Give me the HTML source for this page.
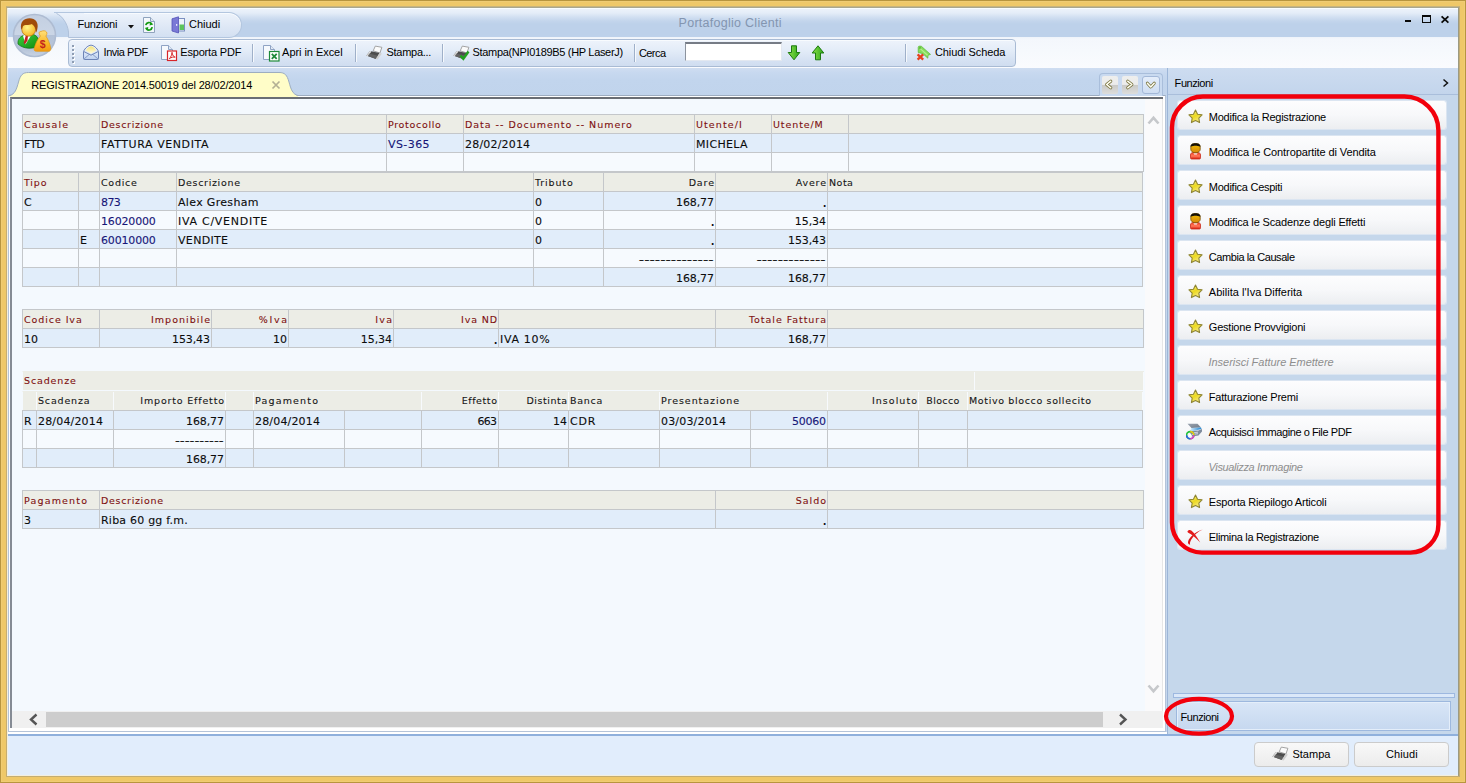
<!DOCTYPE html>
<html lang="it">
<head>
<meta charset="utf-8">
<title>Portafoglio Clienti</title>
<style>
*{box-sizing:border-box;margin:0;padding:0}
html,body{width:1466px;height:783px;overflow:hidden;background:#ebc566}
body{position:relative;font-family:"Liberation Sans","DejaVu Sans",sans-serif;font-size:11px;color:#000}
.abs{position:absolute}
#frame{position:absolute;left:0;top:0;width:1466px;height:783px;background:#efc868;box-shadow:inset 0 0 0 1px #b8953e,inset 0 0 0 2px #f0cc73}
#frame2{position:absolute;left:6px;top:6px;width:1454px;height:771px;background:#f5efdc;border:1px solid #c4ad72;border-top-color:#c8b47c}
#frame3{position:absolute;left:7px;top:7px;width:1452px;height:769px;border-top:1px solid #a9a78f;border-right:1px solid #9c9a82}
#win{position:absolute;left:8px;top:8px;width:1450px;height:767px;background:#c6d8ee;overflow:hidden}
/* title area */
#title{border-top:1px solid #fafdfd;position:absolute;left:0;top:0;width:1450px;height:30px;background:linear-gradient(#ecf2fa 0,#e4edf8 4px,#d2e0f2 8px,#c3d5ec 12px,#bdd1ea 15px,#bdd1ea 30px)}
#band{position:absolute;left:0;top:29px;width:1450px;height:31px;background:linear-gradient(#eef3fa 0,#f4f7fc 2px,#f6f9fd 14px,#fafbfe 31px)}
#qat{position:absolute;left:76px;top:4px;width:158px;height:26px;border:1px solid #b3c6df;border-left:none;border-radius:0 13px 13px 0;background:linear-gradient(#edf3fb 0,#e0e9f6 50%,#d3e0f2 100%);box-shadow:inset 0 1px 0 #f8fbfe}
#qatl{position:absolute;left:30px;top:4px;width:34px;height:26px}
#toolbar{position:absolute;left:60px;top:31px;width:948px;height:28px;border:1px solid #a9bbd4;border-radius:4px;background:linear-gradient(#eef3fb 0,#e3ecf8 40%,#d6e2f3 75%,#d0ddf0 100%);box-shadow:inset 0 1px 0 #f8fbfe}
/* tab strip */
#tabstrip{position:absolute;left:0;top:60px;width:1160px;height:30px;background:linear-gradient(#cfddf1 0,#c7d8ef 5px,#c2d5ed 12px,#c1d4ec 30px)}
#contentw{position:absolute;left:0;top:87px;width:1158px;height:637px;background:#fff;border:1px solid #b4c3d8;border-top-color:#9eadc0}
#content{position:absolute;left:2px;top:89px;width:1153px;height:631px;border-top:2px solid #6a6e74;border-left:2px solid #858b94;background:#f4f9fe}
#vsb{position:absolute;left:1137px;top:91px;width:18px;height:612px;background:#fafafb;border-right:1px solid #e6e6e6}
#hsb{position:absolute;left:4px;top:703px;width:1151px;height:17px;background:#f0f0f0}
#hthumb{position:absolute;left:38px;top:704px;width:1057px;height:15px;background:#cdcdcd}
#l2{position:absolute;left:0;top:724px;width:1159px;height:2px;background:#fff}
/* tables */
table.g{position:absolute;border-collapse:separate;border-spacing:0;border-top:1px solid #c4c7ca;border-left:1px solid #c4c7ca;table-layout:fixed;font-family:"DejaVu Sans","Liberation Sans",sans-serif;font-size:11px;color:#0c0c0c;-webkit-text-stroke:0.1px currentColor}
table.g td{border-right:1px solid #c4c7ca;border-bottom:1px solid #c4c7ca;padding:3px 1px 0 1px;white-space:nowrap;overflow:hidden;line-height:15px;vertical-align:top}
table.g tr.h td{background:#ecede6;color:#7e1010;font-size:9.5px;padding-top:2px}
table.g tr.hb td{background:#ecede6;color:#161616;font-size:9.5px;padding-top:2px}
table.g tr.hb td.red{color:#7e1010}
table.g tr.nb td{border-right-color:#f7fafd;border-bottom-color:#f4f9fe}
table.g.nbt{border-top-color:#ecede6;border-left-color:#f4f9fe}
table.g.nbt tr td{padding-top:1px}
table.g tr.a td{background:#e1edfa}
table.g tr.w td{background:#f6fafe}
table.g td.r{text-align:right}
table.g td.c{text-align:center}
table.g td.b{color:#161678}
.t{position:absolute;white-space:nowrap;color:#000}
/* right panel */
#rp{position:absolute;left:1159px;top:60px;width:291px;height:666px;background:#c5d7eb;border-left:1px solid #9db6d8}
#rph{position:absolute;left:0;top:0;width:290px;height:27px;border-bottom:1px solid #a9bedb;background:linear-gradient(#cddcf0,#c3d5ec)}
.fb{position:absolute;left:1169px;width:270px;height:30px;border-radius:3px;background:linear-gradient(#fdfdfe 0,#f7f8fa 50%,#eceef1 100%);border:1px solid rgba(226,233,243,.75);background-clip:padding-box;box-shadow:none}
#split{position:absolute;left:1165px;top:685px;width:282px;height:5px;border:1px solid #9db8e0;background:#dbe8f9}
#grp{position:absolute;left:1168px;top:693px;width:275px;height:30px;border:1px solid #9db8de;background:linear-gradient(#d9e6f7 0,#cfdff3 50%,#c6d8ef 100%);box-shadow:inset 0 0 0 1px #e4eefa}
/* bottom */
#bline{position:absolute;left:0;top:726px;width:1450px;height:2px;background:#8fb0dc}
#bottom{position:absolute;left:0;top:728px;width:1450px;height:39px;background:#e1edfc}
.btn{position:absolute;top:734px;width:95px;height:25px;border:1px solid #cbcbcb;border-radius:4px;background:linear-gradient(#f8f8f8,#ececec)}
</style>
</head>
<body>
<div id="frame"></div><div id="frame2"></div><div id="frame3"></div>
<div id="win">
  <div id="title"></div>
  <div id="band"></div>
  <div id="qat"></div>
  <div id="toolbar"></div>
  <div id="tabstrip"></div>
  <div id="rp"><div id="rph"></div></div>
  <div id="contentw"></div>
  <div id="content"></div>
  <div id="vsb"></div><div id="hsb"></div><div id="hthumb"></div>
  <div id="l2"></div>
<table class="g " id="t1" style="left:14px;top:106px;width:1122px">
<colgroup><col style="width:77px"><col style="width:287px"><col style="width:77px"><col style="width:231px"><col style="width:77px"><col style="width:77px"><col style="width:295px"></colgroup>
<tr class="h" style="height:19px">
<td style="letter-spacing:1.04px">Causale</td>
<td style="letter-spacing:0.68px">Descrizione</td>
<td style="letter-spacing:0.68px">Protocollo</td>
<td style="letter-spacing:0.98px">Data -- Documento -- Numero</td>
<td style="letter-spacing:1.09px">Utente/I</td>
<td style="letter-spacing:0.9px">Utente/M</td>
<td></td>
</tr>
<tr class="a" style="height:19px">
<td style="letter-spacing:-0.25px">FTD</td>
<td style="letter-spacing:0.58px">FATTURA VENDITA</td>
<td class="b" style="letter-spacing:0.43px">VS-365</td>
<td style="letter-spacing:0.19px">28/02/2014</td>
<td style="letter-spacing:0.33px">MICHELA</td>
<td></td>
<td></td>
</tr>
<tr class="w" style="height:19px">
<td></td>
<td></td>
<td></td>
<td></td>
<td></td>
<td></td>
<td></td>
</tr>
</table>
<table class="g " id="t2" style="left:14px;top:164px;width:1121px">
<colgroup><col style="width:56px"><col style="width:21px"><col style="width:77px"><col style="width:357px"><col style="width:70px"><col style="width:112px"><col style="width:112px"><col style="width:315px"></colgroup>
<tr class="hb" style="height:19px">
<td class="red" style="letter-spacing:0.82px">Tipo</td>
<td></td>
<td style="letter-spacing:0.72px">Codice</td>
<td style="letter-spacing:0.68px">Descrizione</td>
<td style="letter-spacing:0.87px">Tributo</td>
<td class="r" style="letter-spacing:0.87px"><span style="margin-right:-0.87px">Dare</span></td>
<td class="r" style="letter-spacing:0.84px"><span style="margin-right:-0.84px">Avere</span></td>
<td style="letter-spacing:0.48px">Nota</td>
</tr>
<tr class="a" style="height:19px">
<td>C</td>
<td></td>
<td class="b" style="letter-spacing:-0.6px">873</td>
<td style="letter-spacing:0.33px">Alex Gresham</td>
<td>0</td>
<td class="r" style="letter-spacing:-0.1px"><span style="margin-right:0.1px">168,77</span></td>
<td class="r"><span style="font-size:15px;line-height:0;position:relative;top:1px;margin-right:-1px">.</span></td>
<td></td>
</tr>
<tr class="w" style="height:19px">
<td></td>
<td></td>
<td class="b" style="letter-spacing:-0.16px">16020000</td>
<td style="letter-spacing:0.73px">IVA C/VENDITE</td>
<td>0</td>
<td class="r"><span style="font-size:15px;line-height:0;position:relative;top:1px;margin-right:-1px">.</span></td>
<td class="r" style="letter-spacing:-0.08px"><span style="margin-right:0.08px">15,34</span></td>
<td></td>
</tr>
<tr class="a" style="height:19px">
<td></td>
<td>E</td>
<td class="b" style="letter-spacing:-0.16px">60010000</td>
<td style="letter-spacing:0.33px">VENDITE</td>
<td>0</td>
<td class="r"><span style="font-size:15px;line-height:0;position:relative;top:1px;margin-right:-1px">.</span></td>
<td class="r" style="letter-spacing:-0.12px"><span style="margin-right:0.12px">153,43</span></td>
<td></td>
</tr>
<tr class="w" style="height:19px">
<td></td>
<td></td>
<td></td>
<td></td>
<td></td>
<td class="r"><span style="display:inline-block;transform-origin:100% 50%;transform:scaleX(1.345)">--------------</span></td>
<td class="r"><span style="display:inline-block;transform-origin:100% 50%;transform:scaleX(1.341)">-------------</span></td>
<td></td>
</tr>
<tr class="a" style="height:19px">
<td></td>
<td></td>
<td></td>
<td></td>
<td></td>
<td class="r" style="letter-spacing:-0.1px"><span style="margin-right:0.1px">168,77</span></td>
<td class="r" style="letter-spacing:-0.1px"><span style="margin-right:0.1px">168,77</span></td>
<td></td>
</tr>
</table>
<table class="g " id="t3" style="left:14px;top:301px;width:1122px">
<colgroup><col style="width:77px"><col style="width:112px"><col style="width:77px"><col style="width:105px"><col style="width:105px"><col style="width:217px"><col style="width:112px"><col style="width:316px"></colgroup>
<tr class="h" style="height:19px">
<td style="letter-spacing:0.92px">Codice Iva</td>
<td class="r" style="letter-spacing:1.03px"><span style="margin-right:-1.03px">Imponibile</span></td>
<td class="r" style="letter-spacing:1.65px"><span style="margin-right:-1.65px">%Iva</span></td>
<td class="r" style="letter-spacing:1.28px"><span style="margin-right:-1.28px">Iva</span></td>
<td class="r" style="letter-spacing:0.86px"><span style="margin-right:-0.86px">Iva ND</span></td>
<td></td>
<td class="r" style="letter-spacing:0.95px"><span style="margin-right:-0.95px">Totale Fattura</span></td>
<td></td>
</tr>
<tr class="a" style="height:19px">
<td>10</td>
<td class="r" style="letter-spacing:-0.12px"><span style="margin-right:0.12px">153,43</span></td>
<td class="r">10</td>
<td class="r" style="letter-spacing:-0.08px"><span style="margin-right:0.08px">15,34</span></td>
<td class="r"><span style="font-size:15px;line-height:0;position:relative;top:1px;margin-right:-1px">.</span></td>
<td style="letter-spacing:0.68px">IVA 10%</td>
<td class="r" style="letter-spacing:-0.1px"><span style="margin-right:0.1px">168,77</span></td>
<td></td>
</tr>
</table>
<table class="g nbt" id="t4a" style="left:14px;top:363px;width:1122px">
<colgroup><col style="width:952px"><col style="width:169px"></colgroup>
<tr class="h nb" style="height:19px">
<td style="letter-spacing:0.87px">Scadenze</td>
<td></td>
</tr>
</table>
<table class="g nbt" id="t4h" style="left:14px;top:383px;width:1121px">
<colgroup><col style="width:14px"><col style="width:77px"><col style="width:112px"><col style="width:28px"><col style="width:168px"><col style="width:77px"><col style="width:70px"><col style="width:91px"><col style="width:168px"><col style="width:91px"><col style="width:49px"><col style="width:175px"></colgroup>
<tr class="hb nb" style="height:19px">
<td></td>
<td style="letter-spacing:0.83px">Scadenza</td>
<td class="r" style="letter-spacing:0.82px"><span style="margin-right:-0.82px">Importo Effetto</span></td>
<td></td>
<td style="letter-spacing:1.17px">Pagamento</td>
<td class="r" style="letter-spacing:0.59px"><span style="margin-right:-0.59px">Effetto</span></td>
<td class="r" style="letter-spacing:0.52px"><span style="margin-right:-0.52px">Distinta</span></td>
<td style="letter-spacing:0.72px">Banca</td>
<td style="letter-spacing:0.95px">Presentazione</td>
<td class="r" style="letter-spacing:1.04px"><span style="margin-right:-1.04px">Insoluto</span></td>
<td class="c" style="letter-spacing:0.37px">Blocco</td>
<td style="letter-spacing:0.64px">Motivo blocco sollecito</td>
</tr>
</table>
<table class="g " id="t4" style="left:14px;top:402px;width:1121px">
<colgroup><col style="width:14px"><col style="width:77px"><col style="width:112px"><col style="width:28px"><col style="width:91px"><col style="width:77px"><col style="width:77px"><col style="width:70px"><col style="width:91px"><col style="width:91px"><col style="width:77px"><col style="width:91px"><col style="width:49px"><col style="width:175px"></colgroup>
<tr class="a" style="height:19px">
<td>R</td>
<td style="letter-spacing:0.17px">28/04/2014</td>
<td class="r" style="letter-spacing:-0.1px"><span style="margin-right:0.1px">168,77</span></td>
<td></td>
<td style="letter-spacing:0.17px">28/04/2014</td>
<td></td>
<td class="r" style="letter-spacing:-0.7px"><span style="margin-right:0.7px">663</span></td>
<td class="r">14</td>
<td style="letter-spacing:0.8px">CDR</td>
<td style="letter-spacing:0.18px">03/03/2014</td>
<td class="r b" style="letter-spacing:-0.25px"><span style="margin-right:0.25px">50060</span></td>
<td></td>
<td></td>
<td></td>
</tr>
<tr class="w" style="height:19px">
<td></td>
<td></td>
<td class="r"><span style="display:inline-block;transform-origin:100% 50%;transform:scaleX(1.227)">----------</span></td>
<td></td>
<td></td>
<td></td>
<td></td>
<td></td>
<td></td>
<td></td>
<td></td>
<td></td>
<td></td>
<td></td>
</tr>
<tr class="a" style="height:19px">
<td></td>
<td></td>
<td class="r" style="letter-spacing:-0.1px"><span style="margin-right:0.1px">168,77</span></td>
<td></td>
<td></td>
<td></td>
<td></td>
<td></td>
<td></td>
<td></td>
<td></td>
<td></td>
<td></td>
<td></td>
</tr>
</table>
<table class="g " id="t5" style="left:14px;top:482px;width:1122px">
<colgroup><col style="width:77px"><col style="width:616px"><col style="width:112px"><col style="width:316px"></colgroup>
<tr class="h" style="height:19px">
<td style="letter-spacing:1.17px">Pagamento</td>
<td style="letter-spacing:0.68px">Descrizione</td>
<td class="r" style="letter-spacing:0.99px"><span style="margin-right:-0.99px">Saldo</span></td>
<td></td>
</tr>
<tr class="a" style="height:19px">
<td>3</td>
<td style="letter-spacing:0.22px">Riba 60 gg f.m.</td>
<td class="r"><span style="font-size:15px;line-height:0;position:relative;top:1px;margin-right:-1px">.</span></td>
<td></td>
</tr>
</table>
<svg class="abs" style="left:42px;top:4px" width="34" height="27" viewBox="0 0 34 27">
<defs><linearGradient id="qg" x1="0" y1="0" x2="0" y2="1"><stop offset="0" stop-color="#edf3fb"/><stop offset="0.5" stop-color="#e0e9f6"/><stop offset="1" stop-color="#d3e0f2"/></linearGradient></defs>
<path d="M6.500 0.500 C12 3.500 17.500 11 18.500 20 V25.500 H34 V0.500Z" fill="url(#qg)"/>
<path d="M6.500 1.500 C12 4 17.500 11 18.500 20 V25.500 H34" fill="none" stroke="#b0c2db" stroke-width="1"/>
<path d="M4 0.500 H34" fill="none" stroke="#b3c6df" stroke-width="1"/>
</svg>
<svg class="abs" style="left:4px;top:5px" width="46" height="46" viewBox="0 0 46 46">
<defs>
<linearGradient id="og" x1="0" y1="0" x2="0" y2="1"><stop offset="0" stop-color="#c3cfe1"/><stop offset="0.5" stop-color="#cbd6e6"/><stop offset="0.5" stop-color="#b4c2d7"/><stop offset="0.85" stop-color="#b9c6da"/><stop offset="1" stop-color="#c9d4e4"/></linearGradient>
<linearGradient id="bag" x1="0" y1="0" x2="0" y2="1"><stop offset="0" stop-color="#ffe07a"/><stop offset="0.6" stop-color="#fbb826"/><stop offset="1" stop-color="#f29a12"/></linearGradient>
<linearGradient id="suit" x1="0" y1="0" x2="1" y2="1"><stop offset="0" stop-color="#3fd23f"/><stop offset="1" stop-color="#0f8a0f"/></linearGradient>
<radialGradient id="face" cx="40%" cy="35%" r="75%"><stop offset="0" stop-color="#fff48a"/><stop offset="1" stop-color="#f6ae16"/></radialGradient>
</defs>
<circle cx="22.500" cy="22.500" r="21" fill="url(#og)" stroke="#aebcd2" stroke-width="1.600"/>
<!-- man -->
<path d="M6 31 C5.500 26 8.500 23 13 22 L20 21 C24 22 26.500 24.500 26.500 28 L26 33 C21 36.500 11 36 6 31Z" fill="url(#suit)" stroke="#0b6b0b" stroke-width="0.700"/>
<path d="M11 22.800 L15 20.500 L19 22.500 L13.500 31.500Z" fill="#fff"/>
<path d="M13.800 22.500 L16 22.500 L15.500 27.500 L12.800 31.500 L11.800 29.500Z" fill="#c62020"/>
<ellipse cx="16.700" cy="16.500" rx="6.900" ry="6.700" fill="url(#face)" stroke="#b5680e" stroke-width="0.700"/>
<path d="M9.200 16.500 C7.800 9 12 5.300 17.500 5.300 C23.500 5.300 27 10 25.300 16 C25 18 24.500 19 24 19.500 C23.800 15.500 22.500 12.500 20 11 C16.500 12.500 12.500 11.500 11 13 C10.300 14 10 16 9.200 16.500Z" fill="#a04c0a"/>
<!-- bag -->
<path d="M28.500 23 C26.500 21 26.500 18.200 29 18.500 C31 17.300 33.500 17.600 34.500 19 C35.500 20.500 34.500 22.300 33.800 23 C36 26 38 31 38.700 35 C39 37.500 38 38.300 36 38.300 H24.500 C22.500 38.300 21.800 37.300 22.300 35.300 C23.300 31 25.500 26 28.500 23Z" fill="url(#bag)" stroke="#e29a14" stroke-width="0.700"/>
<text x="30.600" y="35" font-family="Liberation Sans,sans-serif" font-weight="bold" font-size="10.500" fill="#c4241c" text-anchor="middle">$</text>
</svg>
<div class="t" style="left:69.4px;top:7.5px;height:16px;line-height:16px;font-size:11px;letter-spacing:-0.23px;">Funzioni</div>
<svg class="abs" style="left:120px;top:17px" width="6" height="4" viewBox="0 0 6 4"><path d="M0 0H6L3 3.500Z" fill="#111"/></svg>
<svg class="abs" style="left:134px;top:8px" width="14" height="18" viewBox="0 0 14 18">
<path d="M1.500 1.500H8.500L12.500 5.500V16.500H1.500Z" fill="#f4f8fc" stroke="#8fa3bd" stroke-width="1"/>
<path d="M8.500 1.500V5.500H12.500" fill="#dfe7f1" stroke="#8fa3bd" stroke-width="1"/>
<path d="M3.800 9.200 A3.300 3.300 0 0 1 9.800 8" fill="none" stroke="#149a14" stroke-width="1.700"/>
<path d="M8.200 6 L11.300 8.600 L7.600 9.600Z" fill="#149a14"/>
<path d="M10.200 11.200 A3.300 3.300 0 0 1 4.200 12.600" fill="none" stroke="#149a14" stroke-width="1.700"/>
<path d="M5.800 14.500 L2.700 12 L6.300 10.900Z" fill="#149a14"/>
</svg>
<svg class="abs" style="left:163px;top:8px" width="15" height="18" viewBox="0 0 15 18">
<rect x="6.500" y="2.500" width="7" height="12.500" fill="#eef3fb" stroke="#7b8fc0" stroke-width="1"/>
<rect x="8.500" y="8.500" width="4.500" height="5.500" fill="#5cc45c"/>
<path d="M1 2.800 L7.500 0.800 V17 L1 15Z" fill="#7a79d6" stroke="#5453b8" stroke-width="0.8"/>
<rect x="5" y="8" width="1.300" height="1.800" fill="#e8e8ff"/>
</svg>
<div class="t" style="left:181.0px;top:7.5px;height:16px;line-height:16px;font-size:11px;letter-spacing:-0.0px;">Chiudi</div>
<div class="t" style="left:670.6px;top:6.8px;height:16px;line-height:16px;font-size:12.5px;letter-spacing:0.27px;color:#8395b0;">Portafoglio Clienti</div>
<svg class="abs" style="left:1396px;top:6px" width="48" height="12" viewBox="0 0 48 12">
<rect x="1" y="6" width="6" height="2" fill="#0a0a0a"/>
<rect x="18.500" y="1.500" width="8" height="7" fill="none" stroke="#0a0a0a" stroke-width="1"/>
<rect x="18" y="1" width="9" height="2" fill="#0a0a0a"/>
<path d="M37.600 2.400L44.400 8.600M44.400 2.400L37.600 8.600" stroke="#0a0a0a" stroke-width="1.800"/>
</svg>
<svg class="abs" style="left:64px;top:37px" width="3" height="19" viewBox="0 0 3 19"><rect x="1" y="1" width="2" height="2" fill="#fff"/><rect x="0" y="0" width="2" height="2" fill="#8e9db3"/><rect x="1" y="5" width="2" height="2" fill="#fff"/><rect x="0" y="4" width="2" height="2" fill="#8e9db3"/><rect x="1" y="9" width="2" height="2" fill="#fff"/><rect x="0" y="8" width="2" height="2" fill="#8e9db3"/><rect x="1" y="13" width="2" height="2" fill="#fff"/><rect x="0" y="12" width="2" height="2" fill="#8e9db3"/><rect x="1" y="17" width="2" height="2" fill="#fff"/><rect x="0" y="16" width="2" height="2" fill="#8e9db3"/></svg>
<svg class="abs" style="left:74px;top:35px" width="18" height="18" viewBox="0 0 18 18">
<defs><linearGradient id="env" x1="0" y1="0" x2="0" y2="1"><stop offset="0" stop-color="#f9fbff"/><stop offset="1" stop-color="#bfd2f0"/></linearGradient>
<linearGradient id="envy" x1="0" y1="0" x2="0" y2="1"><stop offset="0" stop-color="#f3e27a"/><stop offset="1" stop-color="#fffbe0"/></linearGradient></defs>
<path d="M1.500 8.500 C3 5 6.500 2.200 9 2.200 C11.500 2.200 15 5 16.500 8.500 V15.500 Q16.500 16.500 15.500 16.500 H2.500 Q1.500 16.500 1.500 15.500Z" fill="url(#env)" stroke="#6d84b6" stroke-width="1"/>
<path d="M3.800 7.500 C5 5 7.500 3.300 9 3.300 C10.500 3.300 13 5 14.200 7.500 L9 10.800Z" fill="url(#envy)"/>
<path d="M1.800 8.500 L9 12.200 L16.200 8.500" fill="none" stroke="#6d84b6" stroke-width="1"/>
<path d="M2 16 L7.300 11.400 M16 16 L10.700 11.400" stroke="#7f95c2" stroke-width="0.900"/>
</svg>
<div class="t" style="left:95.6px;top:35.5px;height:16px;line-height:16px;font-size:11px;letter-spacing:-0.47px;">Invia PDF</div>
<svg class="abs" style="left:152px;top:36px" width="18" height="18" viewBox="0 0 18 18">
<path d="M1.500 1.500H8.500L12.500 5.500V15.500H1.500Z" fill="#f6f9fd" stroke="#8fa3c4" stroke-width="1"/>
<path d="M8.500 1.500V5.500H12.500" fill="#e1e9f4" stroke="#8fa3c4" stroke-width="1"/>
<rect x="7.500" y="7" width="9" height="9.500" fill="#fff" stroke="#d8252a" stroke-width="1.200"/>
<path d="M9.300 14.700 C11 13 12 10.500 11.800 8.700 C11.500 8.100 12.800 8.300 12.500 9.500 C12.300 11.500 14 13 15.200 13.100 C14 12.700 11 13.300 9.300 14.700Z" fill="none" stroke="#d8252a" stroke-width="1"/>
</svg>
<div class="t" style="left:172.3px;top:35.5px;height:16px;line-height:16px;font-size:11px;letter-spacing:-0.19px;">Esporta PDF</div>
<div class="abs" style="left:244px;top:36px;width:2px;height:18px;background:linear-gradient(90deg,#9fb0c9 0,#9fb0c9 50%,#f6f9fd 50%)"></div>
<svg class="abs" style="left:254px;top:36px" width="18" height="18" viewBox="0 0 18 18">
<path d="M1.500 1.500H8.500L12.500 5.500V15.500H1.500Z" fill="#f6f9fd" stroke="#8fa3c4" stroke-width="1"/>
<path d="M8.500 1.500V5.500H12.500" fill="#e1e9f4" stroke="#8fa3c4" stroke-width="1"/>
<rect x="7.500" y="7.500" width="9.500" height="9.500" fill="#fff" stroke="#1e8a3a" stroke-width="1.200"/>
<path d="M9.800 9.800 L14.700 14.800 M14.700 9.800 L9.800 14.800" stroke="#1e8a3a" stroke-width="1.800"/>
</svg>
<div class="t" style="left:274.1px;top:35.5px;height:16px;line-height:16px;font-size:11px;letter-spacing:-0.05px;">Apri in Excel</div>
<div class="abs" style="left:347px;top:36px;width:2px;height:18px;background:linear-gradient(90deg,#9fb0c9 0,#9fb0c9 50%,#f6f9fd 50%)"></div>
<svg class="abs" style="left:358px;top:37px" width="18" height="16" viewBox="0 0 18 16">
<path d="M9.300 1.100 L15.900 2.300 L13.900 8 L7.200 5.800Z" fill="#fbfbfb" stroke="#9a9a9a" stroke-width="0.900"/>
<path d="M4.100 6.100 L13.600 8 L10 14.100 L0.400 10.600Z" fill="#4d4d4d"/>
<path d="M3.200 8.600 L11.800 10.800 L10 14.100 L0.400 10.600Z" fill="#636363"/>
<path d="M13.600 8 L15.900 8.400 L11.600 14.600 L9.600 14.100Z" fill="#cfcfcf"/>
<path d="M0.200 10.500 L4.100 6.100 L5.500 6.400 L1.700 11Z" fill="#e9e9e9"/>
<path d="M1.300 9.300 L2.700 9.700 M2.300 8.100 L3.700 8.500" stroke="#8a8a8a" stroke-width="0.500"/>
</svg>
<div class="t" style="left:378.5px;top:35.5px;height:16px;line-height:16px;font-size:11px;letter-spacing:-0.28px;">Stampa...</div>
<div class="abs" style="left:434px;top:36px;width:2px;height:18px;background:linear-gradient(90deg,#9fb0c9 0,#9fb0c9 50%,#f6f9fd 50%)"></div>
<svg class="abs" style="left:445px;top:37px" width="18" height="16" viewBox="0 0 18 16">
<path d="M9.300 1.100 L15.900 2.300 L13.900 8 L7.200 5.800Z" fill="#fbfbfb" stroke="#9a9a9a" stroke-width="0.900"/>
<path d="M4.100 6.100 L13.600 8 L10 14.100 L0.400 10.600Z" fill="#4d4d4d"/>
<path d="M3.200 8.600 L11.800 10.800 L10 14.100 L0.400 10.600Z" fill="#636363"/>
<path d="M13.600 8 L15.900 8.400 L11.600 14.600 L9.600 14.100Z" fill="#cfcfcf"/>
<path d="M0.200 10.500 L4.100 6.100 L5.500 6.400 L1.700 11Z" fill="#e9e9e9"/>
<path d="M1.300 9.300 L2.700 9.700 M2.300 8.100 L3.700 8.500" stroke="#8a8a8a" stroke-width="0.500"/>
<path d="M7.500 10.500 L10.300 13.800 L15.500 6.500" fill="none" stroke="#1fa11f" stroke-width="2.400"/></svg>
<div class="t" style="left:464.6px;top:35.5px;height:16px;line-height:16px;font-size:11px;letter-spacing:-0.33px;">Stampa(NPI0189B5 (HP LaserJ)</div>
<div class="abs" style="left:626px;top:36px;width:2px;height:18px;background:linear-gradient(90deg,#9fb0c9 0,#9fb0c9 50%,#f6f9fd 50%)"></div>
<div class="t" style="left:630.9px;top:36.5px;height:16px;line-height:16px;font-size:11px;letter-spacing:-0.55px;">Cerca</div>
<input type="text" class="abs" aria-label="Cerca" style="left:677px;top:34px;width:97px;height:19px;background:#fff;border:1px solid #e3e8f0;border-top:2px solid #767c86;border-left:1px solid #8c939e;outline:none;padding:0;margin:0;border-radius:0;font:11px Liberation Sans,sans-serif">
<svg class="abs" style="left:779px;top:37px" width="14" height="16" viewBox="0 0 14 16"><defs><linearGradient id="ga" x1="0" y1="0" x2="1" y2="0"><stop offset="0" stop-color="#8be04a"/><stop offset="1" stop-color="#2fa81a"/></linearGradient></defs><path d="M4.500 0.800 H9.500 V7.500 H12.800 L7 14.800 L1.200 7.500 H4.500Z" fill="url(#ga)" stroke="#1d7a10" stroke-width="1"/></svg>
<svg class="abs" style="left:803px;top:37px" width="14" height="16" viewBox="0 0 14 16"><path d="M4.500 14.800 H9.500 V8 H12.800 L7 0.800 L1.200 8 H4.500Z" fill="url(#ga)" stroke="#1d7a10" stroke-width="1"/></svg>
<div class="abs" style="left:897px;top:36px;width:2px;height:18px;background:linear-gradient(90deg,#9fb0c9 0,#9fb0c9 50%,#f6f9fd 50%)"></div>
<svg class="abs" style="left:907px;top:36px" width="17" height="17" viewBox="0 0 17 17">
<path d="M3.200 8.400 L3.200 3.400 Q3.300 2 4.800 2.100 L6.400 2.300 L15.500 10.400 L13 11.200 L12.800 14.200 L8 9.800Z" fill="#86dc5c" stroke="#56b832" stroke-width="0.700" stroke-linejoin="round"/>
<path d="M5 4.400 L12.600 11.200" stroke="#b4f08c" stroke-width="1.200"/>
<circle cx="5" cy="4" r="0.700" fill="#2f8a1a"/>
<path d="M2.600 10.300 L8.200 15.700 M8.200 10.300 L2.600 15.700" stroke="#e6401e" stroke-width="2.300"/>
</svg>
<div class="t" style="left:927.0px;top:35.5px;height:16px;line-height:16px;font-size:11px;letter-spacing:-0.1px;">Chiudi Scheda</div>
<svg class="abs" style="left:0px;top:63px" width="292" height="26" viewBox="0 0 292 26">
<path d="M1.500 25 C7 23.500 8.500 18.500 10.500 11 C12.500 4 14.500 1.500 20.500 1.500 H271 C277 1.500 279 4 281 11 C283 18.500 284.500 23.500 290 25 V26 H1.500Z" fill="#fffdc8"/>
<path d="M1.500 24.500 C7 23 8.500 18.500 10.500 11 C12.500 4 14.500 1.500 20.500 1.500 H271 C277 1.500 279 4 281 11 C283 18.500 284.500 23 290 24.500" fill="none" stroke="#9dadc0" stroke-width="1"/>
</svg>
<div class="t" style="left:23.2px;top:69.0px;height:16px;line-height:16px;font-size:11px;letter-spacing:-0.15px;">REGISTRAZIONE 2014.50019 del 28/02/2014</div>
<svg class="abs" style="left:263px;top:72px" width="10" height="10" viewBox="0 0 10 10"><path d="M1.500 1.500L8.500 8.500M8.500 1.500L1.500 8.500" stroke="#b3b094" stroke-width="1.700"/></svg>
<div class="abs" style="left:1091px;top:65px;width:64px;height:23px;border:1px solid #a9bedb;border-bottom:none;border-radius:4px 4px 0 0;background:#c9daf0"></div>
<div class="abs" style="left:1094px;top:68px;width:16px;height:18px;background:linear-gradient(#eeeeed 0,#ececeb 47%,#c9c9c6 50%,#dededc 100%);border-radius:2px;box-shadow:0 0 1px #d9e2ee"></div>
<div class="abs" style="left:1114px;top:68px;width:16px;height:18px;background:linear-gradient(#eeeeed 0,#ececeb 47%,#c9c9c6 50%,#dededc 100%);border-radius:2px;box-shadow:0 0 1px #d9e2ee"></div>
<div class="abs" style="left:1134px;top:68px;width:18px;height:18px;background:linear-gradient(#e4edfa,#cfdef2);border:1px solid #a3b8d8;border-radius:3px"></div>
<svg class="abs" style="left:1095px;top:70px" width="12" height="13" viewBox="0 0 12 13"><path d="M7.800 3.200 L3.600 6.500 L7.800 9.800" fill="none" stroke="#7a7440" stroke-width="3" stroke-linecap="round" stroke-linejoin="round"/><path d="M7.800 3.200 L3.600 6.500 L7.800 9.800" fill="none" stroke="#fffff4" stroke-width="1.500" stroke-linecap="round" stroke-linejoin="round"/></svg>
<svg class="abs" style="left:1116px;top:70px" width="12" height="13" viewBox="0 0 12 13"><path d="M3.700 3.200 L7.900 6.500 L3.700 9.800" fill="none" stroke="#7a7440" stroke-width="3" stroke-linecap="round" stroke-linejoin="round"/><path d="M3.700 3.200 L7.900 6.500 L3.700 9.800" fill="none" stroke="#fffff4" stroke-width="1.500" stroke-linecap="round" stroke-linejoin="round"/></svg>
<svg class="abs" style="left:1136px;top:72px" width="14" height="11" viewBox="0 0 14 11"><path d="M3.400 3.200 L6.800 7 L10.200 3.200" fill="none" stroke="#7a7440" stroke-width="3" stroke-linecap="round" stroke-linejoin="round"/><path d="M3.400 3.200 L6.800 7 L10.200 3.200" fill="none" stroke="#fffff4" stroke-width="1.500" stroke-linecap="round" stroke-linejoin="round"/></svg>
<div class="t" style="left:1166.6px;top:67.0px;height:16px;line-height:16px;font-size:11px;letter-spacing:-0.43px;">Funzioni</div>
<svg class="abs" style="left:1434px;top:70px" width="8" height="10" viewBox="0 0 8 10"><path d="M1.500 1.500 L5.500 5 L1.500 8.500" fill="none" stroke="#111" stroke-width="1.500"/></svg>
<div class="fb" style="top:92px"></div>
<svg class="abs" style="left:1180px;top:100.5px" width="15" height="15" viewBox="0 0 15 15"><defs><linearGradient id="st" x1="0" y1="0" x2="0.600" y2="1"><stop offset="0" stop-color="#fbf5a6"/><stop offset="0.55" stop-color="#ecd91e"/><stop offset="1" stop-color="#f5ea86"/></linearGradient></defs>
<path d="M7.50 1.10 L9.56 5.17 L14.06 5.87 L10.83 9.08 L11.56 13.58 L7.50 11.50 L3.44 13.58 L4.17 9.08 L0.94 5.87 L5.44 5.17Z" fill="url(#st)" stroke="#8f8634" stroke-width="1.100" stroke-linejoin="round"/></svg>
<div class="t" style="left:1200.8px;top:101.0px;height:16px;line-height:16px;font-size:11px;letter-spacing:-0.23px;color:#000;">Modifica la Registrazione</div>
<div class="fb" style="top:127px"></div>
<svg class="abs" style="left:1181.5px;top:134.5px" width="11" height="17" viewBox="0 0 11 17"><defs><linearGradient id="pf" x1="0" y1="0" x2="0" y2="1"><stop offset="0" stop-color="#f5c400"/><stop offset="1" stop-color="#d3860e"/></linearGradient>
<linearGradient id="ps" x1="0" y1="0" x2="0" y2="1"><stop offset="0" stop-color="#f03a1c"/><stop offset="0.55" stop-color="#ff7a5c"/><stop offset="1" stop-color="#d81e0c"/></linearGradient></defs>
<path d="M1.500 16 C0.800 16 0.500 15.500 0.500 14.800 V11.500 C0.500 10.200 2 9.600 3.500 9.400 H7.500 C9 9.600 10.500 10.200 10.500 11.500 V14.800 C10.500 15.500 10.200 16 9.500 16Z" fill="url(#ps)" stroke="#c8281a" stroke-width="0.800"/>
<path d="M3.500 10.200 H7.500 L6.800 11.600 H4.200Z" fill="#fff"/>
<path d="M0.800 3.500 C0.800 1.200 3 0.500 5.500 0.500 C8 0.500 10.200 1.200 10.200 3.500 V6.500 C10.200 8 8.500 9.200 7 9.700 H4 C2.500 9.200 0.800 8 0.800 6.500Z" fill="url(#pf)" stroke="#7a5208" stroke-width="0.800"/>
<path d="M0.600 3.800 C0.600 1 3 0.300 5.500 0.300 C8 0.300 10.400 1 10.400 3.800 C8.500 3 7 2.800 5.500 2.800 C4 2.800 2.500 3 0.600 3.800Z" fill="#141008"/></svg>
<div class="t" style="left:1200.8px;top:136.0px;height:16px;line-height:16px;font-size:11px;letter-spacing:-0.1px;color:#000;">Modifica le Contropartite di Vendita</div>
<div class="fb" style="top:162px"></div>
<svg class="abs" style="left:1180px;top:170.5px" width="15" height="15" viewBox="0 0 15 15"><path d="M7.50 1.10 L9.56 5.17 L14.06 5.87 L10.83 9.08 L11.56 13.58 L7.50 11.50 L3.44 13.58 L4.17 9.08 L0.94 5.87 L5.44 5.17Z" fill="url(#st)" stroke="#8f8634" stroke-width="1.100" stroke-linejoin="round"/></svg>
<div class="t" style="left:1200.8px;top:171.0px;height:16px;line-height:16px;font-size:11px;letter-spacing:-0.26px;color:#000;">Modifica Cespiti</div>
<div class="fb" style="top:197px"></div>
<svg class="abs" style="left:1181.5px;top:204.5px" width="11" height="17" viewBox="0 0 11 17">
<path d="M1.500 16 C0.800 16 0.500 15.500 0.500 14.800 V11.500 C0.500 10.200 2 9.600 3.500 9.400 H7.500 C9 9.600 10.500 10.200 10.500 11.500 V14.800 C10.500 15.500 10.200 16 9.500 16Z" fill="url(#ps)" stroke="#c8281a" stroke-width="0.800"/>
<path d="M3.500 10.200 H7.500 L6.800 11.600 H4.200Z" fill="#fff"/>
<path d="M0.800 3.500 C0.800 1.200 3 0.500 5.500 0.500 C8 0.500 10.200 1.200 10.200 3.500 V6.500 C10.200 8 8.500 9.200 7 9.700 H4 C2.500 9.200 0.800 8 0.800 6.500Z" fill="url(#pf)" stroke="#7a5208" stroke-width="0.800"/>
<path d="M0.600 3.800 C0.600 1 3 0.300 5.500 0.300 C8 0.300 10.400 1 10.400 3.800 C8.500 3 7 2.800 5.500 2.800 C4 2.800 2.500 3 0.600 3.800Z" fill="#141008"/></svg>
<div class="t" style="left:1200.8px;top:206.0px;height:16px;line-height:16px;font-size:11px;letter-spacing:-0.16px;color:#000;">Modifica le Scadenze degli Effetti</div>
<div class="fb" style="top:232px"></div>
<svg class="abs" style="left:1180px;top:240.5px" width="15" height="15" viewBox="0 0 15 15"><path d="M7.50 1.10 L9.56 5.17 L14.06 5.87 L10.83 9.08 L11.56 13.58 L7.50 11.50 L3.44 13.58 L4.17 9.08 L0.94 5.87 L5.44 5.17Z" fill="url(#st)" stroke="#8f8634" stroke-width="1.100" stroke-linejoin="round"/></svg>
<div class="t" style="left:1200.8px;top:241.0px;height:16px;line-height:16px;font-size:11px;letter-spacing:-0.42px;color:#000;">Cambia la Causale</div>
<div class="fb" style="top:267px"></div>
<svg class="abs" style="left:1180px;top:275.5px" width="15" height="15" viewBox="0 0 15 15"><path d="M7.50 1.10 L9.56 5.17 L14.06 5.87 L10.83 9.08 L11.56 13.58 L7.50 11.50 L3.44 13.58 L4.17 9.08 L0.94 5.87 L5.44 5.17Z" fill="url(#st)" stroke="#8f8634" stroke-width="1.100" stroke-linejoin="round"/></svg>
<div class="t" style="left:1200.8px;top:276.0px;height:16px;line-height:16px;font-size:11px;letter-spacing:0.02px;color:#000;">Abilita l&#x27;Iva Differita</div>
<div class="fb" style="top:302px"></div>
<svg class="abs" style="left:1180px;top:310.5px" width="15" height="15" viewBox="0 0 15 15"><path d="M7.50 1.10 L9.56 5.17 L14.06 5.87 L10.83 9.08 L11.56 13.58 L7.50 11.50 L3.44 13.58 L4.17 9.08 L0.94 5.87 L5.44 5.17Z" fill="url(#st)" stroke="#8f8634" stroke-width="1.100" stroke-linejoin="round"/></svg>
<div class="t" style="left:1200.8px;top:311.0px;height:16px;line-height:16px;font-size:11px;letter-spacing:-0.22px;color:#000;">Gestione Provvigioni</div>
<div class="fb" style="top:337px"></div>
<div class="t" style="left:1200.5px;top:346.0px;height:16px;line-height:16px;font-size:11px;letter-spacing:-0.03px;color:#8e8e8e;font-style:italic;">Inserisci Fatture Emettere</div>
<div class="fb" style="top:372px"></div>
<svg class="abs" style="left:1180px;top:380.5px" width="15" height="15" viewBox="0 0 15 15"><path d="M7.50 1.10 L9.56 5.17 L14.06 5.87 L10.83 9.08 L11.56 13.58 L7.50 11.50 L3.44 13.58 L4.17 9.08 L0.94 5.87 L5.44 5.17Z" fill="url(#st)" stroke="#8f8634" stroke-width="1.100" stroke-linejoin="round"/></svg>
<div class="t" style="left:1200.8px;top:381.0px;height:16px;line-height:16px;font-size:11px;letter-spacing:-0.21px;color:#000;">Fatturazione Premi</div>
<div class="fb" style="top:407px"></div>
<svg class="abs" style="left:1178px;top:415px" width="17" height="17" viewBox="0 0 17 17"><defs><linearGradient id="sc1" x1="0" y1="0" x2="1" y2="1"><stop offset="0" stop-color="#9aa4b0"/><stop offset="1" stop-color="#6d7887"/></linearGradient>
<linearGradient id="sc2" x1="0" y1="0" x2="1" y2="0"><stop offset="0" stop-color="#dff2ff"/><stop offset="1" stop-color="#1f86d2"/></linearGradient></defs>
<path d="M1.500 0.800 H11.500 L15 4.500 L5.500 5Z" fill="url(#sc1)"/>
<path d="M5.500 5 L15 4.500 L15.500 6 L8 8 L3.500 8.500Z" fill="url(#sc2)"/>
<path d="M3.500 8.500 L12.500 7.500 L16 6 V8.500 L12.500 12.500 L6 13.500 Z" fill="#7d8b9d"/>
<path d="M6 10 L12 9.200 M6 11.500 L12 10.700" stroke="#dfe7f0" stroke-width="0.800"/>
<circle cx="4.200" cy="12.200" r="3.600" fill="none" stroke="#22c33a" stroke-width="1.600"/>
<path d="M4.200 8.600 A3.600 3.600 0 0 1 7.800 12.200" fill="none" stroke="#f2c21a" stroke-width="1.600"/>
<path d="M7.800 12.200 A3.600 3.600 0 0 1 4.200 15.800" fill="none" stroke="#e23ad0" stroke-width="1.600"/>
<path d="M4.200 15.800 A3.600 3.600 0 0 1 0.600 12.200" fill="none" stroke="#2a62e8" stroke-width="1.600"/>
<circle cx="4.200" cy="12.200" r="1.300" fill="#fff"/></svg>
<div class="t" style="left:1200.8px;top:416.0px;height:16px;line-height:16px;font-size:11px;letter-spacing:-0.42px;color:#000;">Acquisisci Immagine o File PDF</div>
<div class="fb" style="top:442px"></div>
<div class="t" style="left:1200.5px;top:451.0px;height:16px;line-height:16px;font-size:11px;letter-spacing:-0.35px;color:#8e8e8e;font-style:italic;">Visualizza Immagine</div>
<div class="fb" style="top:477px"></div>
<svg class="abs" style="left:1180px;top:485.5px" width="15" height="15" viewBox="0 0 15 15"><path d="M7.50 1.10 L9.56 5.17 L14.06 5.87 L10.83 9.08 L11.56 13.58 L7.50 11.50 L3.44 13.58 L4.17 9.08 L0.94 5.87 L5.44 5.17Z" fill="url(#st)" stroke="#8f8634" stroke-width="1.100" stroke-linejoin="round"/></svg>
<div class="t" style="left:1200.8px;top:486.0px;height:16px;line-height:16px;font-size:11px;letter-spacing:-0.18px;color:#000;">Esporta Riepilogo Articoli</div>
<div class="fb" style="top:512px"></div>
<svg class="abs" style="left:1179px;top:520.5px" width="16" height="16" viewBox="0 0 16 16"><path d="M15.800 0.500 C11 2.500 6.500 6.500 4 11 C3 13 2.600 14.500 3.200 15.600 C1.600 15.600 0.600 14.200 1.100 12.400 C2.200 8.400 8 3 15.800 0.500Z" fill="#dd1414"/>
<path d="M0.400 2.800 C0.900 1 3 0.400 4.600 1.700 C7.600 4.400 10.800 9 13.200 13.600 C10 10.200 6.600 7 3.600 5 C2.200 4.200 1 3.800 0.400 2.800Z" fill="#e21a1a"/></svg>
<div class="t" style="left:1200.8px;top:521.0px;height:16px;line-height:16px;font-size:11px;letter-spacing:-0.33px;color:#000;">Elimina la Registrazione</div>
<div id="split"></div><div id="grp"></div>
<div class="t" style="left:1172.5px;top:701.0px;height:16px;line-height:16px;font-size:11px;letter-spacing:-0.44px;">Funzioni</div>
  <div id="bline"></div>
  <div id="bottom"></div>
<svg class="abs" style="left:1139px;top:107px" width="13" height="10" viewBox="0 0 13 10"><path d="M1.500 8.500 L6.500 2.800 L11.500 8.500" fill="none" stroke="#c6c8cb" stroke-width="2.600"/></svg>
<svg class="abs" style="left:1139px;top:676px" width="13" height="10" viewBox="0 0 13 10"><path d="M1.500 1.500 L6.500 7.200 L11.500 1.500" fill="none" stroke="#c6c8cb" stroke-width="2.600"/></svg>
<svg class="abs" style="left:19px;top:705px" width="12" height="13" viewBox="0 0 12 13"><path d="M9.500 1.500 L4 6.500 L9.500 11.500" fill="none" stroke="#555" stroke-width="2.400"/></svg>
<svg class="abs" style="left:1109px;top:705px" width="12" height="13" viewBox="0 0 12 13"><path d="M3 1.500 L8.500 6.500 L3 11.500" fill="none" stroke="#555" stroke-width="2.400"/></svg>
<div class="btn" style="left:1246px"></div><div class="btn" style="left:1346px"></div>
<svg class="abs" style="left:1264px;top:738px" width="18" height="16" viewBox="0 0 18 16">
<path d="M9.300 1.100 L15.900 2.300 L13.900 8 L7.200 5.800Z" fill="#fbfbfb" stroke="#9a9a9a" stroke-width="0.900"/>
<path d="M4.100 6.100 L13.600 8 L10 14.100 L0.400 10.600Z" fill="#4d4d4d"/>
<path d="M3.200 8.600 L11.800 10.800 L10 14.100 L0.400 10.600Z" fill="#636363"/>
<path d="M13.600 8 L15.900 8.400 L11.600 14.600 L9.600 14.100Z" fill="#cfcfcf"/>
<path d="M0.200 10.500 L4.100 6.100 L5.500 6.400 L1.700 11Z" fill="#e9e9e9"/>
<path d="M1.300 9.300 L2.700 9.700 M2.300 8.100 L3.700 8.500" stroke="#8a8a8a" stroke-width="0.500"/>
</svg>
<div class="t" style="left:1284.5px;top:738.3px;height:16px;line-height:16px;font-size:11px;letter-spacing:-0.01px;">Stampa</div>
<div class="t" style="left:1378.1px;top:738.3px;height:16px;line-height:16px;font-size:11px;letter-spacing:0.08px;">Chiudi</div>
<svg class="abs" style="left:1152px;top:82px" width="300" height="470" viewBox="0 0 300 470"><path d="M43.0 6.5 H244.39999999999998 A34 34 0 0 1 278.4 40.5 V434.6 A28 28 0 0 1 250.39999999999998 462.6 H42.0 A30 30 0 0 1 12.0 432.6 V37.5 A31 31 0 0 1 43.0 6.5Z" fill="none" stroke="#f2000c" stroke-width="4.400"/></svg>
<svg class="abs" style="left:1152px;top:684px" width="80" height="50" viewBox="0 0 80 50"><ellipse cx="39" cy="24.300" rx="33" ry="17.400" fill="none" stroke="#f2000c" stroke-width="4.200"/></svg>
</div>
</body>
</html>
